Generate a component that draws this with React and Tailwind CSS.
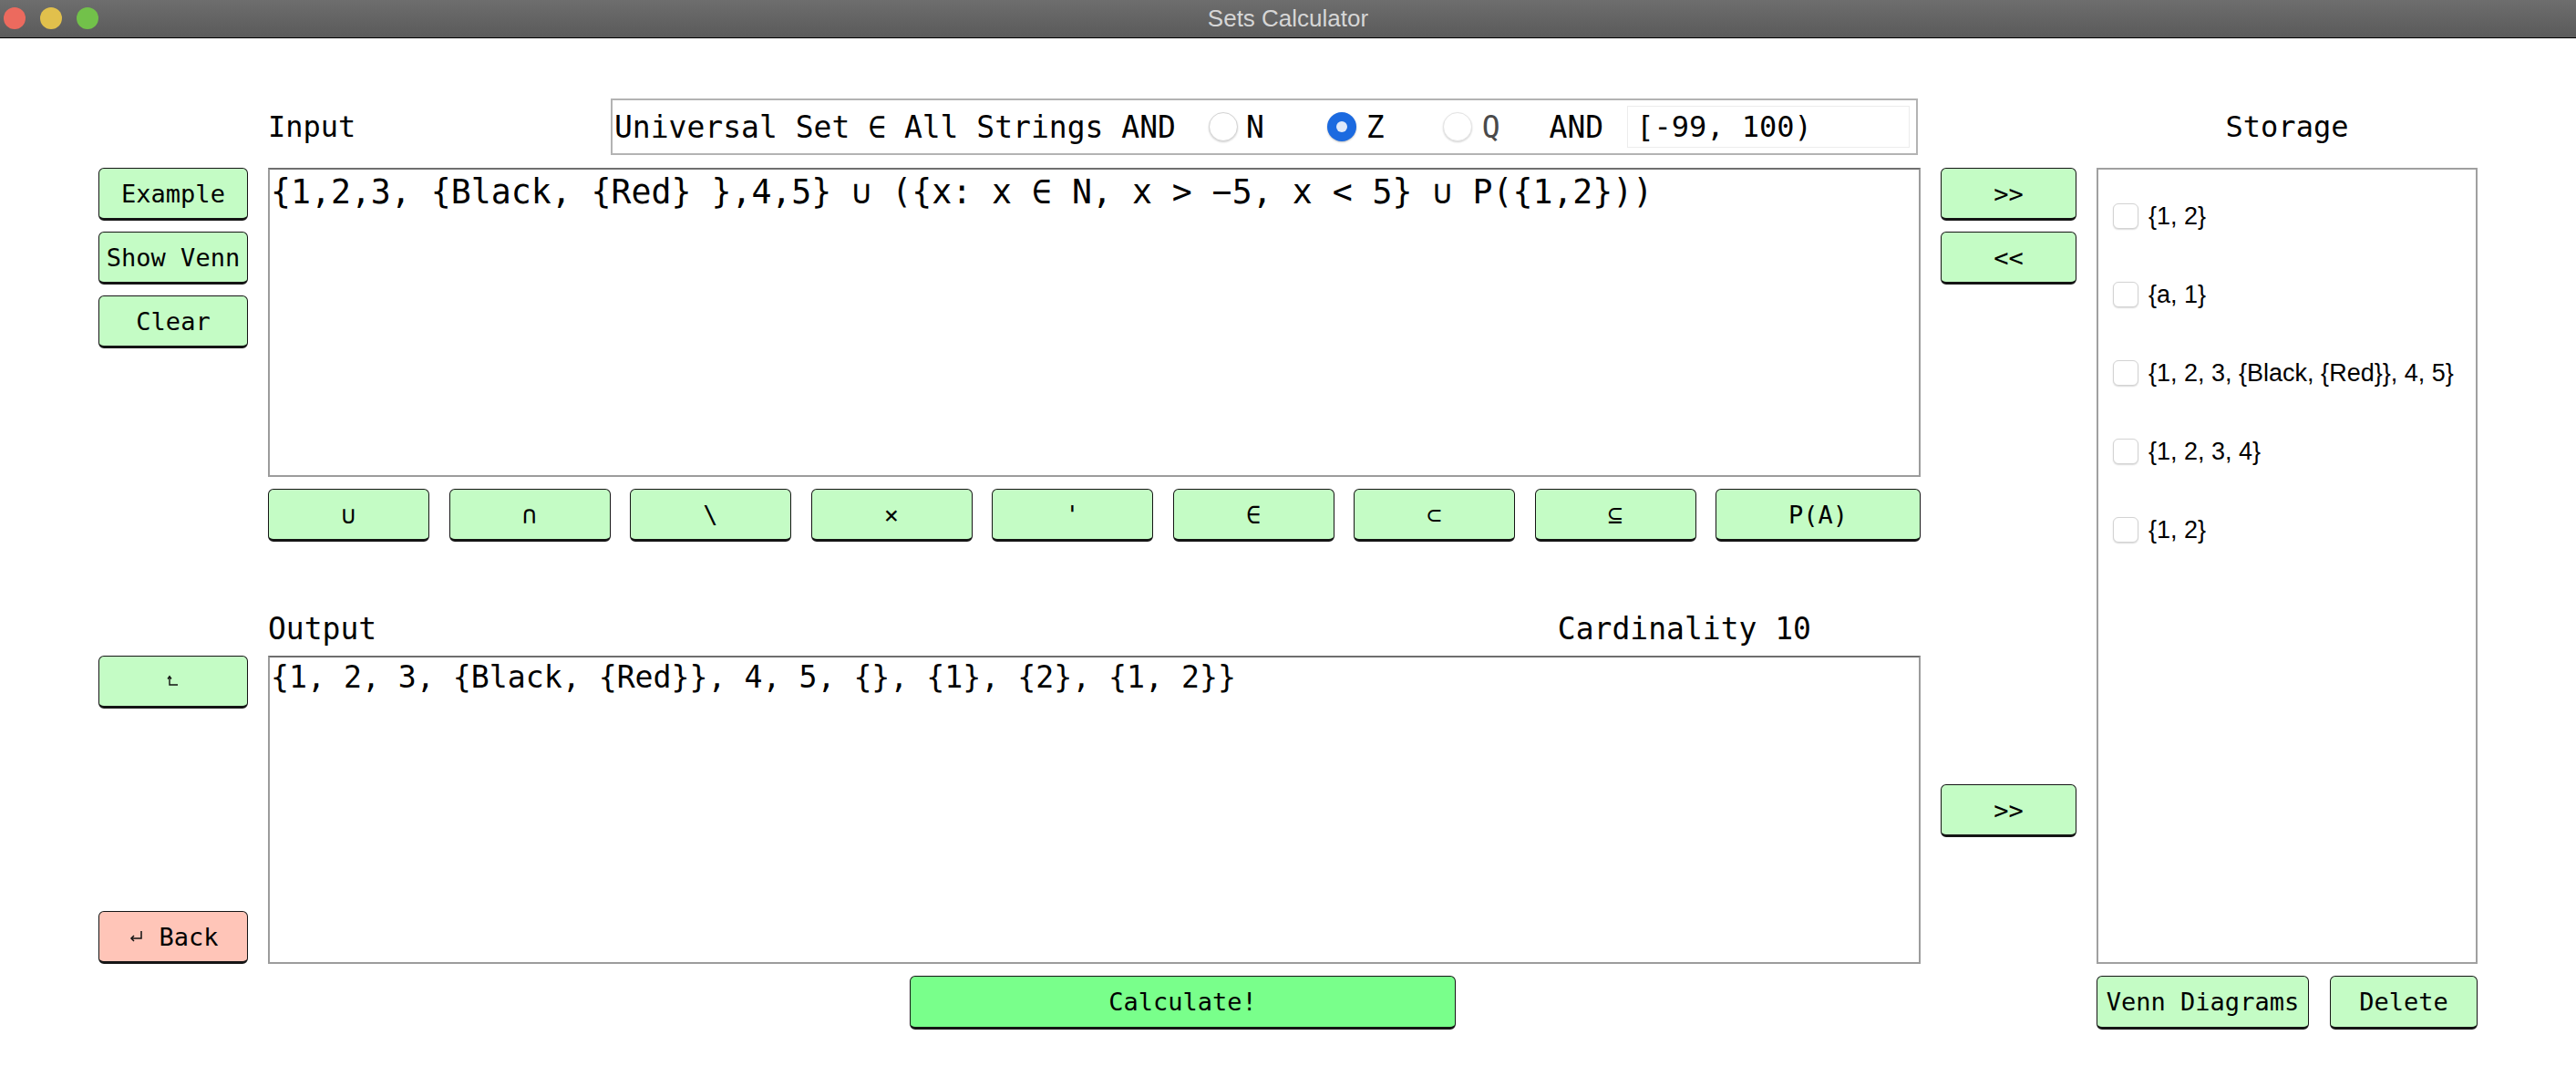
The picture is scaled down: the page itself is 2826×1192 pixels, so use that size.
import React from "react";

const MONO = "font-['DejaVu_Sans_Mono','Liberation_Mono',monospace]";

function Btn({ children, className = "" }) {
  return (
    <div
      className={
        "flex items-center justify-center rounded-[6px] border-[1.5px] border-b-[3px] border-[#151515] text-[27px] leading-none text-black " +
        MONO +
        " " +
        className
      }
    >
      {children}
    </div>
  );
}

function Radio({ checked, dim }) {
  if (checked) {
    return (
      <div className="flex h-[32px] w-[32px] items-center justify-center rounded-full bg-[#1b6ae0] shadow-[0_1px_2px_rgba(0,0,0,0.25)]">
        <div className="h-[12px] w-[12px] rounded-full bg-[#dfe9fa]" />
      </div>
    );
  }
  return (
    <div
      className={
        "h-[32px] w-[32px] rounded-full border bg-white shadow-[0_1px_2px_rgba(0,0,0,0.18)] " +
        (dim ? "border-[#e4e4e4]" : "border-[#d4d4d4]")
      }
    />
  );
}

function Check() {
  return (
    <div className="h-[28px] w-[28px] shrink-0 rounded-[6px] border border-[#d3d3d3] bg-white shadow-[0_1px_1.5px_rgba(0,0,0,0.15)]" />
  );
}

const storage = [
  "{1, 2}",
  "{a, 1}",
  "{1, 2, 3, {Black, {Red}}, 4, 5}",
  "{1, 2, 3, 4}",
  "{1, 2}",
];

const ops = ["∪", "∩", "\\", "×", "'", "∈", "⊂", "⊆"];

export default function App() {
  return (
    <div className="h-[1192px] w-[2826px] overflow-hidden bg-white">
      {/* Title bar */}
      <div className="relative flex h-[42px] items-center justify-center border-b border-black bg-gradient-to-b from-[#6e6e6e] to-[#5a5a5a]">
        <div className="absolute left-[4px] top-[8px] flex gap-[16px]">
          <div className="h-[24px] w-[24px] rounded-full bg-[#ec6a5e]" />
          <div className="h-[24px] w-[24px] rounded-full bg-[#e1c04c]" />
          <div className="h-[24px] w-[24px] rounded-full bg-[#72c14a]" />
        </div>
        <span className="font-['Liberation_Sans',Arial,sans-serif] text-[26px] text-[#d6d6d6]">
          Sets Calculator
        </span>
      </div>

      <div className="mt-[66px] flex pl-[108px]">
        {/* Left block: three columns */}
        <div className="flex flex-col">
          {/* Row 1: header */}
          <div className="flex h-[62px] gap-[22px]">
            <div className="w-[164px]" />
            <div className="flex w-[1813px] items-center">
              <span className={"text-[32px] leading-none text-black " + MONO}>Input</span>
              <div className="ml-auto mr-[3px] flex h-[62px] w-[1434px] items-center border-2 border-[#b3b3b3] pl-[2px]">
                <span className={"whitespace-pre text-[33px] leading-none text-black " + MONO}>
                  Universal Set ∈ All Strings AND
                </span>
                <div className="ml-[36px]">
                  <Radio />
                </div>
                <span className={"ml-[9px] text-[33px] leading-none text-black " + MONO}>N</span>
                <div className="ml-[69px]">
                  <Radio checked />
                </div>
                <span className={"ml-[11px] text-[33px] leading-none text-black " + MONO}>Z</span>
                <div className="ml-[64px]">
                  <Radio dim />
                </div>
                <span className={"ml-[11px] text-[33px] leading-none text-[#4a4a4a] " + MONO}>Q</span>
                <span className={"ml-[54px] text-[33px] leading-none text-black " + MONO}>AND</span>
                <div className="ml-[26px] flex h-[46px] w-[310px] items-center border border-[#ececec] pl-[9px]">
                  <span className={"whitespace-pre text-[32px] leading-none text-black " + MONO}>
                    [-99, 100)
                  </span>
                </div>
              </div>
            </div>
            <div className="w-[149px]" />
          </div>

          {/* Row 2: input */}
          <div className="mt-[14px] flex h-[339px] gap-[22px]">
            <div className="flex w-[164px] flex-col gap-[12px]">
              <Btn className="h-[58px] bg-[#c4fcc5]">Example</Btn>
              <Btn className="h-[58px] bg-[#c4fcc5]">Show Venn</Btn>
              <Btn className="h-[58px] bg-[#c4fcc5]">Clear</Btn>
            </div>
            <div className="w-[1813px] border-2 border-[#9c9c9c] border-t-[#6f6f6f] pl-[1px] pt-[4px]">
              <div className={"whitespace-pre text-[36.5px] leading-[42px] text-black " + MONO}>
                {"{1,2,3, {Black, {Red} },4,5} ∪ ({x: x ∈ N, x > −5, x < 5} ∪ P({1,2}))"}
              </div>
            </div>
            <div className="flex w-[149px] flex-col gap-[12px]">
              <Btn className="h-[58px] bg-[#c4fcc5]">&gt;&gt;</Btn>
              <Btn className="h-[58px] bg-[#c4fcc5]">&lt;&lt;</Btn>
            </div>
          </div>

          {/* Row 3: operator buttons */}
          <div className="mt-[13px] flex h-[58px] gap-[22px]">
            <div className="w-[164px]" />
            <div className="flex w-[1813px] gap-[21.5px]">
              {ops.map((o, i) => (
                <Btn key={i} className="h-[58px] w-[177px] bg-[#c4fcc5]">
                  {o}
                </Btn>
              ))}
              <Btn className="h-[58px] flex-1 bg-[#c4fcc5]">P(A)</Btn>
            </div>
            <div className="w-[149px]" />
          </div>

          {/* Row 4: output labels */}
          <div className="flex h-[125px] gap-[22px]">
            <div className="w-[164px]" />
            <div className={"flex w-[1813px] items-end justify-between pb-[13px] pr-[120px] text-[33px] leading-none text-black " + MONO}>
              <span>Output</span>
              <span>Cardinality 10</span>
            </div>
            <div className="w-[149px]" />
          </div>

          {/* Row 5: output */}
          <div className="flex h-[338px] gap-[22px]">
            <div className="flex w-[164px] flex-col justify-between">
              <Btn className="h-[58px] bg-[#c4fcc5]">
                <svg width="14" height="14" viewBox="0 0 14 14" fill="none" stroke="#111" strokeWidth="1.4">
                  <path d="M3 2 L3 11 L12 11" />
                  <path d="M1 4.5 L3 1.8 L5 4.5" />
                </svg>
              </Btn>
              <Btn className="h-[58px] gap-[16px] bg-[#ffc5b8]">
                <svg width="18" height="16" viewBox="0 0 18 16" fill="none" stroke="#111" strokeWidth="1.5">
                  <path d="M15 2 L15 10 L4 10" />
                  <path d="M7 7 L4 10 L7 13" />
                </svg>
                <span>Back</span>
              </Btn>
            </div>
            <div className="w-[1813px] border-2 border-[#9c9c9c] border-t-[#6f6f6f] pl-[1px] pt-[3px]">
              <div className={"whitespace-pre text-[33.2px] leading-[38px] text-black " + MONO}>
                {"{1, 2, 3, {Black, {Red}}, 4, 5, {}, {1}, {2}, {1, 2}}"}
              </div>
            </div>
            <div className="flex w-[149px] flex-col">
              <Btn className="mt-[141px] h-[58px] bg-[#c4fcc5]">&gt;&gt;</Btn>
            </div>
          </div>

          {/* Row 6: calculate */}
          <div className="mt-[13px] flex h-[59px] gap-[22px]">
            <div className="w-[164px]" />
            <div className="flex w-[1813px]">
              <Btn className="ml-[704px] h-[59px] w-[599px] bg-[#79ff8b]">Calculate!</Btn>
            </div>
            <div className="w-[149px]" />
          </div>
        </div>

        {/* Storage column */}
        <div className="ml-[22px] flex w-[418px] flex-col">
          <div className={"flex h-[62px] items-center justify-center text-[32px] leading-none text-black " + MONO}>
            Storage
          </div>
          <div className="mt-[14px] flex h-[873px] flex-col border-2 border-[#a0a0a0] pl-[16px] pt-[8px]">
            {storage.map((s, i) => (
              <div key={i} className="flex h-[86px] items-center gap-[11px]">
                <Check />
                <span className="font-['Liberation_Sans',Arial,sans-serif] text-[27px] leading-none text-black">
                  {s}
                </span>
              </div>
            ))}
          </div>
          <div className="mt-[13px] flex h-[59px] justify-between">
            <Btn className="h-[59px] w-[233px] bg-[#c4fcc5]">Venn Diagrams</Btn>
            <Btn className="h-[59px] w-[162px] bg-[#c4fcc5]">Delete</Btn>
          </div>
        </div>
      </div>
    </div>
  );
}
